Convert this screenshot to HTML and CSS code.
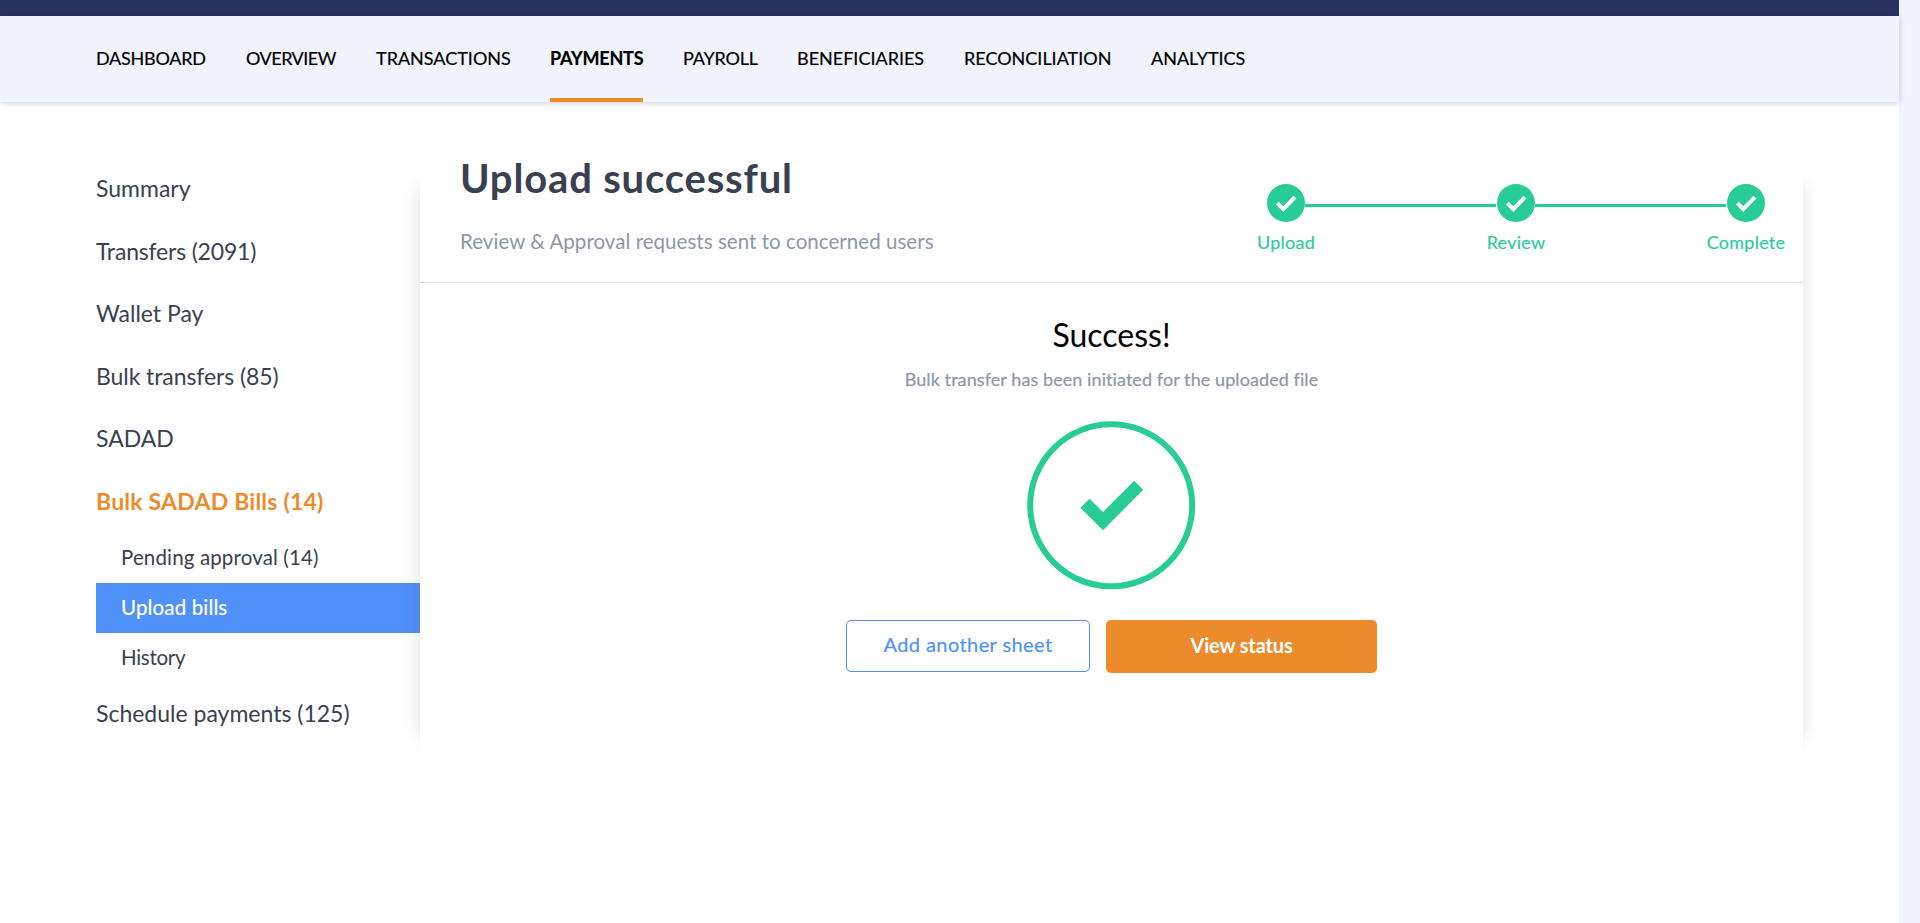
FILE: index.html
```html
<!DOCTYPE html>
<html lang="en">
<head>
<meta charset="utf-8">
<title>Bulk SADAD Bills</title>
<link rel="stylesheet" href="styles.css">
</head>
<body>
<div class="page">
  <header class="topbar"></header>
  <nav class="nav">
    <a class="nav-item dashboard">DASHBOARD</a>
    <a class="nav-item overview">OVERVIEW</a>
    <a class="nav-item">TRANSACTIONS</a>
    <a class="nav-item active">PAYMENTS</a>
    <a class="nav-item payroll">PAYROLL</a>
    <a class="nav-item">BENEFICIARIES</a>
    <a class="nav-item">RECONCILIATION</a>
    <a class="nav-item">ANALYTICS</a>
  </nav>
  <main class="main">
    <aside class="side">
      <a class="side-item summary">Summary</a>
      <a class="side-item tight">Transfers (2091)</a>
      <a class="side-item">Wallet Pay</a>
      <a class="side-item bulk">Bulk transfers (85)</a>
      <a class="side-item">SADAD</a>
      <a class="side-item current">Bulk SADAD Bills (14)</a>
      <div class="sub">
        <a class="sub-item pending">Pending approval (14)</a>
        <a class="sub-item selected">Upload bills</a>
        <a class="sub-item history">History</a>
      </div>
      <a class="side-item">Schedule payments (125)</a>
    </aside>
    <section class="panel">
      <div class="panel-head">
        <div class="heading">
          <h1 class="title">Upload successful</h1>
          <p class="subtitle">Review &amp; Approval requests sent to concerned users</p>
        </div>
        <div class="steps">
          <div class="step">
            <svg class="step-icon" viewBox="0 0 38 38"><circle cx="19" cy="19" r="19"/><path d="M10.4 19.2 16.3 25.1 28 13.1"/></svg>
            <span class="step-label">Upload</span>
          </div>
          <div class="step-line"></div>
          <div class="step">
            <svg class="step-icon" viewBox="0 0 38 38"><circle cx="19" cy="19" r="19"/><path d="M10.4 19.2 16.3 25.1 28 13.1"/></svg>
            <span class="step-label">Review</span>
          </div>
          <div class="step-line"></div>
          <div class="step">
            <svg class="step-icon" viewBox="0 0 38 38"><circle cx="19" cy="19" r="19"/><path d="M10.4 19.2 16.3 25.1 28 13.1"/></svg>
            <span class="step-label">Complete</span>
          </div>
        </div>
      </div>
      <div class="result">
        <h2 class="result-title">Success!</h2>
        <p class="result-text">Bulk transfer has been initiated for the uploaded file</p>
        <svg class="result-icon" viewBox="0 0 169 169"><circle cx="84.2" cy="84.3" r="81"/><path d="M53.4 86.7 62.6 77.7 76 91 107.2 59.7 116.2 68.7 76 109.3Z"/></svg>
        <div class="actions">
          <button class="btn outline">Add another sheet</button>
          <button class="btn solid">View status</button>
        </div>
      </div>
    </section>
  </main>
</div>
</body>
</html>
```
FILE: styles.css
```css
* { box-sizing: border-box; }
body {
  margin: 0;
  background: #f1f4fd;
  font-family: Lato, "Open Sans", sans-serif;
  color: #394151;
}
h1, h2, p { margin: 0; }
.page {
  width: 1899px;
  height: 923px;
  background: #fff;
}
.topbar {
  height: 16px;
  background: #2b345f;
}
.nav {
  position: relative;
  display: grid;
  grid-template-columns: 150px 130px 174px 133px 114px 167px 187px 100px;
  justify-items: start;
  height: 86px;
  padding-left: 96px;
  background: #f1f4fd;
  box-shadow: 0 1px 6px rgba(0, 0, 0, .22);
}
.nav-item {
  height: 86px;
  line-height: 85px;
  font-size: 18px;
  color: #000;
  white-space: nowrap;
  -webkit-text-stroke: .2px #000;
}
.dashboard { letter-spacing: -.25px; }
.overview { letter-spacing: -.5px; }
.payroll { letter-spacing: -.2px; }
.active {
  width: 93px;
  font-weight: 700;
  letter-spacing: -.2px;
  border-bottom: 4px solid #ec8b2c;
}
.main {
  display: flex;
  padding-left: 96px;
}
.side {
  display: flex;
  flex-direction: column;
  width: 324px;
  padding-top: 55px;
}
.side-item {
  height: 62.5px;
  line-height: 63px;
  font-size: 23px;
  white-space: nowrap;
}
.tight { letter-spacing: -.18px; }
.bulk { letter-spacing: -.08px; }
.current {
  color: #ec8b2c;
  font-weight: 700;
  letter-spacing: .22px;
}
.sub { padding-top: 1px; margin-bottom: -1px; }
.sub-item {
  display: block;
  height: 50px;
  padding-left: 25px;
  line-height: 49.5px;
  font-size: 20.5px;
}
.pending { letter-spacing: .14px; }
.history { letter-spacing: -.3px; }
.selected {
  background: #5090f9;
  color: #fff;
  letter-spacing: .15px;
  -webkit-text-stroke: .2px #fff;
}
.panel {
  position: relative;
  width: 1383px;
  height: 700px;
  margin-top: 10px;
  background: #fff;
  box-shadow: -75px 0 16px -75px rgba(40, 50, 90, .15), 75px 0 16px -75px rgba(40, 50, 90, .15);
}
.panel-head {
  display: flex;
  justify-content: space-between;
  height: 171px;
  padding: 44px 38px 0 40px;
  border-bottom: 1px solid #d9e0ea;
}
.title {
  line-height: 44px;
  font-size: 40px;
  letter-spacing: .83px;
}
.subtitle {
  margin-top: 27px;
  line-height: 28px;
  font-size: 20.5px;
  letter-spacing: .04px;
  color: #8c97aa;
}
.steps {
  display: flex;
  padding-top: 28px;
}
.step {
  display: flex;
  flex-direction: column;
  align-items: center;
  width: 38px;
  color: #28cc97;
}
.step-icon { width: 38px; height: 38px; }
.step-icon circle { fill: #28cc97; }
.step-icon path { fill: none; stroke: #fff; stroke-width: 4; }
.step-label {
  margin-top: 10px;
  line-height: 20px;
  font-size: 18px;
  letter-spacing: .25px;
  white-space: nowrap;
  -webkit-text-stroke: .15px #28cc97;
}
.step-line {
  width: 191px;
  height: 3px;
  margin: 20px 1px 0 0;
  background: #28cc97;
}
.result {
  display: flex;
  flex-direction: column;
  align-items: center;
  padding-top: 32px;
}
.result-title {
  line-height: 40px;
  font-size: 32px;
  font-weight: 400;
  color: #000;
}
.result-text {
  margin-top: 13px;
  line-height: 22px;
  font-size: 18px;
  letter-spacing: .08px;
  color: #8c97aa;
  -webkit-text-stroke: .2px #8c97aa;
}
.result-icon { width: 169px; height: 169px; margin-top: 31px; }
.result-icon circle { fill: none; stroke: #28cc97; stroke-width: 6; }
.result-icon path { fill: #28cc97; }
.actions {
  display: flex;
  gap: 16px;
  margin-top: 30px;
}
.btn {
  padding: 0 0 4px;
  font-family: inherit;
  font-size: 20px;
  border-radius: 5px;
}
.outline {
  width: 244px;
  height: 52px;
  border: 1px solid #5090f9;
  background: #fff;
  color: #5090f9;
  letter-spacing: .42px;
  -webkit-text-stroke: .15px #5090f9;
}
.solid {
  width: 271px;
  height: 53px;
  border: 0;
  background: #ec8b2c;
  color: #fff;
  font-weight: 700;
  letter-spacing: -.15px;
}
```
